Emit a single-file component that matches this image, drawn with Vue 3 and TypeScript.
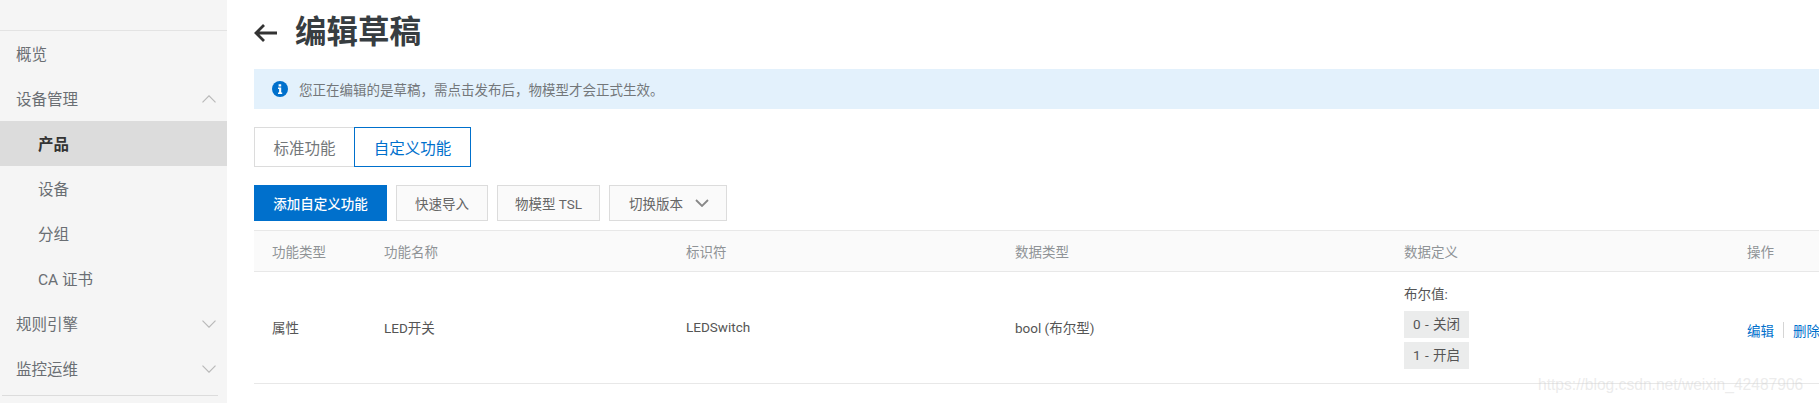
<template>
  <div class="page">
    <aside class="side">
      <div class="side-top" />
      <ul class="menu">
        <li v-for="m in menu" :key="m.label" class="item" :class="{ sub: m.sub, active: m.active }">
          <span>{{ m.label }}</span>
          <svg v-if="m.arrow" class="chev" viewBox="0 0 14 8" :class="{ up: m.arrow === 'up' }">
            <path d="M.5.7 7 7.2 13.5.7" />
          </svg>
        </li>
      </ul>
      <div class="side-end" />
    </aside>

    <main class="main">
      <header class="head">
        <svg class="back" viewBox="0 0 23 18">
          <path d="M23 9H2M10 1 2 9l8 8" />
        </svg>
        <h1>编辑草稿</h1>
      </header>

      <div class="alert">
        <svg class="info" viewBox="0 0 16 16">
          <circle cx="8" cy="8" r="8" />
          <path d="M6.600 3.200h2.600v2.200H6.600zM6 6.600h3.200v5h1v1.300H6v-1.300h1.100V7.900H6z" />
        </svg>
        <span>您正在编辑的是草稿，需点击发布后，物模型才会正式生效。</span>
      </div>

      <div class="tabs">
        <button class="tab">标准功能</button>
        <button class="tab on">自定义功能</button>
      </div>

      <div class="tools">
        <button class="btn primary">添加自定义功能</button>
        <button class="btn w2">快速导入</button>
        <button class="btn w3">物模型 TSL</button>
        <button class="btn w4">
          切换版本
          <svg class="drop" viewBox="0 0 14 8"><path d="M1 1l6 6 6-6" /></svg>
        </button>
      </div>

      <div class="table">
        <div class="row thead">
          <div v-for="c in cols" :key="c">{{ c }}</div>
        </div>
        <div class="row tbody">
          <div>属性</div>
          <div>LED开关</div>
          <div>LEDSwitch</div>
          <div>bool (布尔型)</div>
          <div class="def">
            <p>布尔值:</p>
            <span class="tag">0 - 关闭</span>
            <span class="tag">1 - 开启</span>
          </div>
          <div class="ops"><a>编辑</a><i /><a>删除</a></div>
        </div>
      </div>
    </main>

    <div class="mark">https://blog.csdn.net/weixin_42487906</div>
  </div>
</template>

<script setup lang="ts">
interface MenuItem {
  label: string
  sub?: boolean
  active?: boolean
  arrow?: 'up' | 'down'
}

const menu: MenuItem[] = [
  { label: '概览' },
  { label: '设备管理', arrow: 'up' },
  { label: '产品', sub: true, active: true },
  { label: '设备', sub: true },
  { label: '分组', sub: true },
  { label: 'CA 证书', sub: true },
  { label: '规则引擎', arrow: 'down' },
  { label: '监控运维', arrow: 'down' },
]

const cols = ['功能类型', '功能名称', '标识符', '数据类型', '数据定义', '操作']
</script>

<style>
html, body { margin: 0; background: #fff; overflow: hidden; }
</style>

<style scoped>
.page {
  position: relative;
  display: flex;
  width: 1819px;
  height: 403px;
  overflow: hidden;
  font-family: Roboto, "Noto Sans CJK SC", sans-serif;
  font-size: 13.5px;
  color: #333;
  background: #fff;
}
.side { flex: 0 0 227px; background: #f5f5f5; }
.side-top { height: 30px; border-bottom: 1px solid #e3e3e3; }
.menu { list-style: none; margin: 0; padding: 0; }
.item {
  display: flex;
  align-items: center;
  justify-content: space-between;
  height: 45px;
  padding: 0 11px 0 16px;
  font-size: 15.5px;
  color: #6a6e73;
}
.item span { margin-top: -1px; }
.item.sub { padding-left: 38px; }
.item.active { background: #dcdcdc; color: #333; font-weight: 700; }
.chev { width: 14px; height: 8px; fill: none; stroke: #b9b9b9; stroke-width: 1.2; }
.chev.up { transform: rotate(180deg); }
.side-end { height: 1px; margin: 4px 9px 0 2px; background: #dcdcdc; }

.main { flex: 1; min-width: 0; padding-left: 27px; overflow: hidden; }
.head { display: flex; align-items: center; height: 69px; padding-bottom: 3px; box-sizing: border-box; }
.back { width: 23px; height: 18px; margin-right: 18px; fill: none; stroke: #333; stroke-width: 2.8; }
.head h1 { margin: 0; font-size: 31.5px; line-height: 40px; font-weight: 700; color: #373d41; }

.alert {
  display: flex;
  align-items: center;
  height: 40px;
  padding-left: 18px;
  background: #e3f1fc;
  color: #73777a;
}
.info { width: 16px; height: 16px; margin-right: 11px; }
.info circle { fill: #0070cc; }
.info path { fill: #fff; }

.tabs { display: flex; margin-top: 18px; }
.tab {
  height: 40px;
  width: 100px;
  padding: 0;
  font: inherit;
  font-size: 15.5px;
  color: #73777a;
  background: #fff;
  border: 1px solid #dcdcdc;
  border-right: 0;
}
.tab.on { width: 117px; color: #0070cc; border: 1px solid #0070cc; }

.tools { display: flex; gap: 9px; margin-top: 18px; }
.btn {
  height: 36px;
  padding: 0;
  font: inherit;
  color: #666;
  background: #fafafa;
  border: 1px solid #dcdcdc;
}
.btn.primary { width: 133px; color: #fff; font-weight: 500; background: #0070cc; border-color: #0070cc; }
.w2 { width: 92px; }
.w3 { width: 103px; }
.w4 { width: 118px; display: flex; align-items: center; padding-left: 19px; }
.drop { width: 14px; height: 8px; margin-left: 12px; fill: none; stroke: #888; stroke-width: 1.8; }

.table { margin-top: 9px; width: 1600px; }
.row {
  display: grid;
  grid-template-columns: 130px 302px 329px 389px 343px 1fr;
  align-items: center;
  border-bottom: 1px solid #e8e8e8;
}
.row > div:first-child { padding-left: 18px; }
.thead {
  height: 42px;
  box-sizing: border-box;
  color: #8f9396;
  background: #fafafa;
  border-top: 1px solid #e8e8e8;
}
.tbody { height: 112px; box-sizing: border-box; color: #555; }
.tbody > div { margin-top: -2px; }
.tbody > .def { margin-top: -3px; }
.def { display: flex; flex-direction: column; align-items: flex-start; gap: 4px; }
.def p { margin: 0 0 3px; line-height: 20px; }
.tag {
  width: 65px;
  height: 27px;
  line-height: 27px;
  text-align: center;
  word-spacing: 1px;
  background: #ebecec;
}
.ops { display: flex; align-items: center; padding-top: 6px; white-space: nowrap; color: #0070cc; }
.ops i { width: 1px; height: 16px; margin: 0 9px; background: #d5d5d5; }

.mark {
  position: absolute;
  left: 1538px;
  top: 373px;
  font-family: "Liberation Sans", sans-serif;
  font-size: 15.6px;
  line-height: 24px;
  white-space: nowrap;
  color: rgba(205, 205, 205, .4);
}
</style>
